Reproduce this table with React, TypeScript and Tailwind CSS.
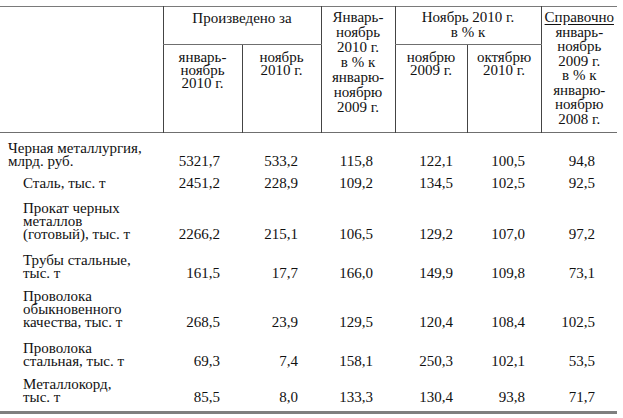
const serif = "font-['Liberation_Serif'] font-normal";

const valuePad = ["pr-[22px]", "pr-[23px]", "pr-[22px]", "pr-[14px]", "pr-[16px]", "pr-[22px]"];

const rows = [
  { label: ["Черная металлургия,", "млрд. руб."], top: true, pt: "pt-[9px]", vals: ["5321,7", "533,2", "115,8", "122,1", "100,5", "94,8"] },
  { label: ["Сталь, тыс. т"], pt: "pt-[9px]", vals: ["2451,2", "228,9", "109,2", "134,5", "102,5", "92,5"] },
  { label: ["Прокат черных", "металлов", "(готовый), тыс. т"], pt: "pt-[12px]", vals: ["2266,2", "215,1", "106,5", "129,2", "107,0", "97,2"] },
  { label: ["Трубы стальные,", "тыс. т"], pt: "pt-[13px]", vals: ["161,5", "17,7", "166,0", "149,9", "109,8", "73,1"] },
  { label: ["Проволока", "обыкновенного", "качества, тыс. т"], pt: "pt-[10px]", vals: ["268,5", "23,9", "129,5", "120,4", "108,4", "102,5"] },
  { label: ["Проволока", "стальная, тыс. т"], pt: "pt-[13px]", vals: ["69,3", "7,4", "158,1", "250,3", "102,1", "53,5"] },
  { label: ["Металлокорд,", "тыс. т"], pt: "pt-[10px]", vals: ["85,5", "8,0", "133,3", "130,4", "93,8", "71,7"] },
];

function Br({ items }: { items: string[] }) {
  return (
    <>
      {items.map((t, i) => (
        <span key={i} className={`block whitespace-nowrap ${serif}`}>
          {t}
        </span>
      ))}
    </>
  );
}

export default function App() {
  return (
    <div className="w-[623px] h-[418px] bg-white pt-[6px] text-[15px] text-[#111] font-['Liberation_Serif'] [&_*]:font-['Liberation_Serif']">
      <table className="w-[617px] table-fixed border-collapse border-t border-t-[#7a7a7a]">
        <colgroup>
          <col className="w-[163px]" />
          <col className="w-[79px]" />
          <col className="w-[79px]" />
          <col className="w-[74px]" />
          <col className="w-[72px]" />
          <col className="w-[74px]" />
          <col className="w-[76px]" />
        </colgroup>
        <thead className="border-b border-b-[#6f6f6f]">
          <tr className="h-[38px]">
            <th rowSpan={2} className="p-0" />
            <th colSpan={2} className={`p-0 pt-[4px] align-top text-center leading-[15px] border-l border-l-[#444] border-b border-b-[#6f6f6f] ${serif}`}>
              Произведено за
            </th>
            <th rowSpan={2} className={`p-0 pt-[3px] align-top text-center leading-[15px] border-l border-l-[#444] ${serif}`}>
              <Br items={["Январь-", "ноябрь", "2010 г.", "в % к", "январю-", "ноябрю", "2009 г."]} />
            </th>
            <th colSpan={2} className={`p-0 pt-[3px] align-top text-center leading-[15px] border-l border-l-[#444] border-b border-b-[#6f6f6f] ${serif}`}>
              <Br items={["Ноябрь 2010 г.", "в % к"]} />
            </th>
            <th rowSpan={2} className={`p-0 pt-[3px] align-top text-center leading-[14.5px] border-l border-l-[#444] ${serif}`}>
              <span className={`block underline underline-offset-2 ${serif}`}>Справочно</span>
              <Br items={["январь-", "ноябрь", "2009 г.", "в % к", "январю-", "ноябрю", "2008 г."]} />
            </th>
          </tr>
          <tr className="h-[88px]">
            <th className={`p-0 pt-[6px] align-top text-center leading-[13px] border-l border-l-[#444] ${serif}`}>
              <Br items={["январь-", "ноябрь", "2010 г."]} />
            </th>
            <th className={`p-0 pt-[6px] align-top text-center leading-[13px] border-l border-l-[#444] ${serif}`}>
              <Br items={["ноябрь", "2010 г."]} />
            </th>
            <th className={`p-0 pt-[6px] align-top text-center leading-[13px] border-l border-l-[#444] ${serif}`}>
              <Br items={["ноябрю", "2009 г."]} />
            </th>
            <th className={`p-0 pt-[6px] align-top text-center leading-[13px] border-l border-l-[#444] ${serif}`}>
              <Br items={["октябрю", "2010 г."]} />
            </th>
          </tr>
        </thead>
        <tbody className="border-b-[3px] border-b-[#7f7f7f]">
          {rows.map((r, i) => {
            const last = i === rows.length - 1;
            return (
              <tr key={i}>
                <td className={`p-0 align-bottom leading-[13px] ${r.pt} ${last ? "pb-[7px]" : ""} ${r.top ? "pl-[8px]" : "pl-[23px]"} ${serif}`}>
                  <Br items={r.label} />
                </td>
                {r.vals.map((v, j) => (
                  <td key={j} className={`p-0 align-bottom text-right leading-[13px] ${r.pt} ${last ? "pb-[7px]" : ""} ${valuePad[j]} ${serif}`}>
                    {v}
                  </td>
                ))}
              </tr>
            );
          })}
        </tbody>
      </table>
    </div>
  );
}
